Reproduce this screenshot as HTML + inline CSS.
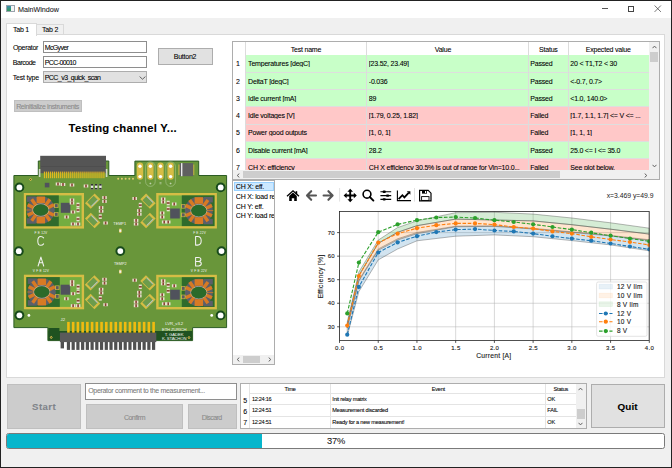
<!DOCTYPE html>
<html><head><meta charset="utf-8">
<style>
*{box-sizing:border-box;margin:0;padding:0}
html,body{width:672px;height:468px;overflow:hidden;background:#1f3a4e}
body{position:relative;font-family:"Liberation Sans",sans-serif;color:#000}
.a{position:absolute}
.t{position:absolute;white-space:nowrap;line-height:1;-webkit-text-stroke:0.08px currentColor}
.tx{font-size:7px;letter-spacing:-0.2px;color:#000}
.inp{background:#fff;border:1px solid #8e8e8e}
.btn{background:#e1e1e1;border:1px solid #adadad}
.dis{background:#cccccc;border:1px solid #bfbfbf}
</style></head><body>
<div class="a" style="left:0;top:0;width:672px;height:468px;background:#222"></div>
<div class="a" style="left:1px;top:1px;width:670px;height:466px;background:#f0f0f0"></div>
<div class="a" style="left:1px;top:1px;width:670px;height:17px;background:#fff"></div>
<div class="a" style="left:6px;top:4.5px;width:8.5px;height:7.5px;border:1px solid #9aa3ad;background:#f4f4f4"></div>
<div class="a" style="left:7px;top:5.5px;width:3.5px;height:5.5px;background:linear-gradient(#3c8fb0,#2f9a58)"></div>
<div class="t" style="left:18.00px;top:5.61px;font-size:7.2px;letter-spacing:-0.021px;color:#1a1a1a">MainWindow</div>
<div class="a" style="left:602px;top:8.4px;width:6.2px;height:0.9px;background:#555"></div>
<div class="a" style="left:628.2px;top:5.6px;width:6.2px;height:6.3px;border:0.9px solid #444"></div>
<svg class="a" style="left:654px;top:5px" width="8" height="8" viewBox="0 0 8 8"><path d="M0.6 0.5L6.9 6.9M6.9 0.5L0.6 6.9" stroke="#444" stroke-width="0.75"/></svg>
<div class="a" style="left:36px;top:24.4px;width:28px;height:10.2px;background:#f0f0f0;border:1px solid #d9d9d9;border-bottom:none"></div>
<div class="a" style="left:6px;top:34.4px;width:659px;height:343.6px;background:#fff;border:1px solid #d9d9d9"></div>
<div class="a" style="left:6px;top:23.4px;width:31px;height:12.2px;background:#fff;border:1px solid #d9d9d9;border-bottom:none"></div>
<div class="t" style="left:13.00px;top:25.97px;font-size:7.0px;letter-spacing:-0.225px;color:#000">Tab 1</div>
<div class="t" style="left:42.10px;top:26.07px;font-size:7.0px;letter-spacing:-0.225px;color:#000">Tab 2</div>
<div class="t" style="left:12.90px;top:43.97px;font-size:7.0px;letter-spacing:-0.316px;color:#000">Operator</div>
<div class="t" style="left:12.80px;top:59.07px;font-size:7.0px;letter-spacing:-0.482px;color:#000">Barcode</div>
<div class="t" style="left:12.80px;top:74.07px;font-size:7.0px;letter-spacing:-0.213px;color:#000">Test type</div>
<div class="a inp" style="left:43px;top:41.2px;width:104px;height:11.5px"></div>
<div class="a inp" style="left:43px;top:56.4px;width:104px;height:11.5px"></div>
<div class="a btn" style="left:43px;top:71.2px;width:104px;height:11.6px"></div>
<div class="t" style="left:44.70px;top:44.27px;font-size:7.0px;letter-spacing:-0.629px;color:#000">McGyver</div>
<div class="t" style="left:44.70px;top:59.37px;font-size:7.0px;letter-spacing:-0.597px;color:#000">PCC-00010</div>
<div class="t" style="left:44.70px;top:74.17px;font-size:7.0px;letter-spacing:-0.546px;color:#000">PCC_v3_quick_scan</div>
<svg class="a" style="left:138.5px;top:76.2px" width="7" height="4" viewBox="0 0 7 4"><path d="M0.6 0.6L3.5 3.2L6.4 0.6" stroke="#444" stroke-width="0.8" fill="none"/></svg>
<div class="a btn" style="left:158px;top:48px;width:55px;height:16.5px"></div>
<div class="t" style="left:173.75px;top:52.87px;font-size:7.0px;letter-spacing:-0.233px;color:#000">Button2</div>
<div class="a dis" style="left:14px;top:100.2px;width:68.4px;height:11.5px"></div>
<div class="t" style="left:16.20px;top:102.97px;font-size:7.0px;letter-spacing:-0.382px;color:#8a8a8a">Reinitialize instruments</div>
<div class="t" style="left:68.60px;top:122.93px;font-size:11.3px;letter-spacing:0.224px;color:#000;font-weight:bold">Testing channel Y...</div>
<svg class="a" style="left:10px;top:150px" width="222" height="205" viewBox="10 150 222 205" font-family="Liberation Sans, sans-serif">
<polygon points="13.9,175.5 38.3,175.5 38.3,161.0 108.8,161.0 108.8,175.5 134.9,175.5 134.9,161.1 198.7,161.1 198.7,175.5 226.6,175.5 226.6,327.6 192.6,327.6 192.6,340.6 47.9,340.6 47.9,327.6 13.9,327.6" fill="#69963a" stroke="#2c5c24" stroke-width="1"/>
<rect x="48.4" y="331" width="143.7" height="9.1" fill="#1f5220"/>
<rect x="48.4" y="328" width="11" height="12.1" fill="#1f5220"/>
<rect x="40.2" y="155.8" width="65.8" height="17.4" fill="#555555"/>
<rect x="41" y="166" width="64" height="1" fill="#4a4a4a" opacity="0.6"/>
<rect x="43.90" y="171.6" width="1.2" height="6.6" fill="#e0b720"/>
<rect x="45.88" y="171.6" width="1.2" height="6.6" fill="#e0b720"/>
<rect x="47.86" y="171.6" width="1.2" height="6.6" fill="#e0b720"/>
<rect x="49.84" y="171.6" width="1.2" height="6.6" fill="#e0b720"/>
<rect x="51.82" y="171.6" width="1.2" height="6.6" fill="#e0b720"/>
<rect x="53.80" y="171.6" width="1.2" height="6.6" fill="#e0b720"/>
<rect x="55.78" y="171.6" width="1.2" height="6.6" fill="#e0b720"/>
<rect x="57.76" y="171.6" width="1.2" height="6.6" fill="#e0b720"/>
<rect x="59.74" y="171.6" width="1.2" height="6.6" fill="#e0b720"/>
<rect x="61.72" y="171.6" width="1.2" height="6.6" fill="#e0b720"/>
<rect x="63.70" y="171.6" width="1.2" height="6.6" fill="#e0b720"/>
<rect x="65.68" y="171.6" width="1.2" height="6.6" fill="#e0b720"/>
<rect x="67.66" y="171.6" width="1.2" height="6.6" fill="#e0b720"/>
<rect x="69.64" y="171.6" width="1.2" height="6.6" fill="#e0b720"/>
<rect x="71.62" y="171.6" width="1.2" height="6.6" fill="#e0b720"/>
<rect x="73.60" y="171.6" width="1.2" height="6.6" fill="#e0b720"/>
<rect x="75.58" y="171.6" width="1.2" height="6.6" fill="#e0b720"/>
<rect x="77.56" y="171.6" width="1.2" height="6.6" fill="#e0b720"/>
<rect x="79.54" y="171.6" width="1.2" height="6.6" fill="#e0b720"/>
<rect x="81.52" y="171.6" width="1.2" height="6.6" fill="#e0b720"/>
<rect x="83.50" y="171.6" width="1.2" height="6.6" fill="#e0b720"/>
<rect x="85.48" y="171.6" width="1.2" height="6.6" fill="#e0b720"/>
<rect x="87.46" y="171.6" width="1.2" height="6.6" fill="#e0b720"/>
<rect x="89.44" y="171.6" width="1.2" height="6.6" fill="#e0b720"/>
<rect x="91.42" y="171.6" width="1.2" height="6.6" fill="#e0b720"/>
<rect x="93.40" y="171.6" width="1.2" height="6.6" fill="#e0b720"/>
<rect x="95.38" y="171.6" width="1.2" height="6.6" fill="#e0b720"/>
<rect x="97.36" y="171.6" width="1.2" height="6.6" fill="#e0b720"/>
<rect x="99.34" y="171.6" width="1.2" height="6.6" fill="#e0b720"/>
<rect x="101.32" y="171.6" width="1.2" height="6.6" fill="#e0b720"/>
<rect x="103.30" y="171.6" width="1.2" height="6.6" fill="#e0b720"/>
<rect x="38.8" y="169" width="1.6" height="8" fill="#cfd8c8"/>
<rect x="105.8" y="169" width="1.6" height="8" fill="#cfd8c8"/>
<rect x="136.80" y="162.4" width="6.4" height="17.4" rx="3.2" fill="#d6bd45"/>
<circle cx="140.0" cy="166.3" r="1.7" fill="#fff"/><circle cx="140.0" cy="176.6" r="1.7" fill="#fff"/>
<rect x="147.20" y="162.4" width="6.4" height="17.4" rx="3.2" fill="#d6bd45"/>
<circle cx="150.4" cy="166.3" r="1.7" fill="#fff"/><circle cx="150.4" cy="176.6" r="1.7" fill="#fff"/>
<rect x="157.30" y="162.4" width="6.4" height="17.4" rx="3.2" fill="#d6bd45"/>
<circle cx="160.5" cy="166.3" r="1.7" fill="#fff"/><circle cx="160.5" cy="176.6" r="1.7" fill="#fff"/>
<rect x="167.40" y="162.4" width="6.4" height="17.4" rx="3.2" fill="#d6bd45"/>
<circle cx="170.6" cy="166.3" r="1.7" fill="#fff"/><circle cx="170.6" cy="176.6" r="1.7" fill="#fff"/>
<rect x="145.60" y="161.8" width="9.6" height="24.6" rx="4.8" fill="none" stroke="#d9e8cc" stroke-width="0.35"/>
<rect x="165.80" y="161.8" width="9.6" height="24.6" rx="4.8" fill="none" stroke="#d9e8cc" stroke-width="0.35"/>
<path d="M139 183H141M149.4 183.5H151.4M150.4 182.5V184.5M159.5 182.6H161.5M159.5 183.8H161.5M169.6 183.5H171.6M170.6 182.5V184.5" stroke="#e0e8d8" stroke-width="0.5"/>
<circle cx="118.2" cy="178.8" r="1.0" fill="#e0cc70"/>
<circle cx="121.9" cy="178.8" r="1.0" fill="#e0cc70"/>
<circle cx="125.6" cy="178.8" r="1.0" fill="#e0cc70"/>
<circle cx="129.3" cy="178.8" r="1.0" fill="#e0cc70"/>
<circle cx="133.0" cy="178.8" r="1.0" fill="#e0cc70"/>
<rect x="178.3" y="164.5" width="16" height="10.6" fill="#d6bd45" opacity="0.8"/>
<rect x="179.6" y="163.1" width="13.6" height="13.1" fill="#606060"/>
<rect x="181" y="163.1" width="1.4" height="13.1" fill="#e8e8e8"/>
<path d="M30.6 177.9L32.2 179.5L30.6 181.1L29.0 179.5Z" fill="#d8c050"/><circle cx="30.6" cy="179.5" r="0.5" fill="#2a2a10"/>
<path d="M51.2 335.79999999999995L52.800000000000004 337.4L51.2 339.0L49.6 337.4Z" fill="#d8c050"/><circle cx="51.2" cy="337.4" r="0.5" fill="#2a2a10"/>
<path d="M189 336.0L190.6 337.6L189 339.20000000000005L187.4 337.6Z" fill="#d8c050"/><circle cx="189" cy="337.6" r="0.5" fill="#2a2a10"/>
<circle cx="19.4" cy="187.4" r="4.9" fill="#184a1c"/><circle cx="19.4" cy="187.4" r="2.9" fill="#fff"/>
<circle cx="220.7" cy="187.4" r="4.9" fill="#184a1c"/><circle cx="220.7" cy="187.4" r="2.9" fill="#fff"/>
<circle cx="18.8" cy="251.2" r="4.9" fill="#184a1c"/><circle cx="18.8" cy="251.2" r="2.9" fill="#fff"/>
<circle cx="120.3" cy="251.1" r="4.9" fill="#184a1c"/><circle cx="120.3" cy="251.1" r="2.9" fill="#fff"/>
<circle cx="221.5" cy="251.1" r="4.9" fill="#184a1c"/><circle cx="221.5" cy="251.1" r="2.9" fill="#fff"/>
<circle cx="19.4" cy="315.3" r="4.9" fill="#184a1c"/><circle cx="19.4" cy="315.3" r="2.9" fill="#fff"/>
<circle cx="220.6" cy="315.4" r="4.9" fill="#184a1c"/><circle cx="220.6" cy="315.4" r="2.9" fill="#fff"/>
<circle cx="28.9" cy="315.4" r="1.4" fill="#fff"/>
<circle cx="211.7" cy="315.4" r="1.4" fill="#fff"/>
<rect x="25.0" y="194.2" width="57.800000000000004" height="33.199999999999996" fill="#74ad40" stroke="#d6bd45" stroke-width="2.4"/>
<rect x="26.2" y="195.4" width="32.6" height="30.799999999999994" fill="#2f6b2c"/>
<rect x="26.80" y="196.40" width="9" height="5.5" fill="#5c5f6a"/>
<rect x="26.80" y="218.20" width="9" height="5.5" fill="#5c5f6a"/>
<ellipse cx="40.8" cy="210.0" rx="14" ry="13.8" fill="#5c5f6a"/>
<line x1="47.48" y1="212.10" x2="53.97" y2="215.21" stroke="#d77a24" stroke-width="3.4"/>
<line x1="45.43" y1="214.29" x2="49.93" y2="220.65" stroke="#d77a24" stroke-width="3.4"/>
<line x1="47.48" y1="207.90" x2="53.97" y2="204.79" stroke="#d77a24" stroke-width="3.4"/>
<line x1="45.43" y1="205.71" x2="49.93" y2="199.35" stroke="#d77a24" stroke-width="3.4"/>
<line x1="34.12" y1="212.10" x2="27.63" y2="215.21" stroke="#d77a24" stroke-width="3.4"/>
<line x1="36.17" y1="214.29" x2="31.67" y2="220.65" stroke="#d77a24" stroke-width="3.4"/>
<line x1="34.12" y1="207.90" x2="27.63" y2="204.79" stroke="#d77a24" stroke-width="3.4"/>
<line x1="36.17" y1="205.71" x2="31.67" y2="199.35" stroke="#d77a24" stroke-width="3.4"/>
<line x1="33.30" y1="210.0" x2="26.30" y2="210.0" stroke="#d77a24" stroke-width="0.8"/>
<rect x="36.60" y="196.60" width="8.5" height="6.6" fill="#d77a24"/>
<rect x="36.60" y="216.60" width="8.5" height="6.8" fill="#d77a24"/>
<ellipse cx="40.8" cy="210.0" rx="8.0" ry="6.1" fill="none" stroke="#c8d0c8" stroke-width="0.6"/>
<ellipse cx="40.8" cy="210.0" rx="7.7" ry="5.8" fill="#2b6a2a"/>
<rect x="54.099999999999994" y="203.5" width="4.4" height="4.4" fill="#d6bd45"/><rect x="54.9" y="204.1" width="2.8" height="3.2" fill="#5a5a60"/>
<rect x="54.099999999999994" y="212.10000000000002" width="4.4" height="4.4" fill="#d6bd45"/><rect x="54.9" y="212.70000000000002" width="2.8" height="3.2" fill="#5a5a60"/>
<rect x="60.8" y="202.8" width="9.6" height="10" fill="#50525c"/>
<rect x="69.70" y="198.50" width="4.6" height="3" fill="#e6e0cc"/><rect x="71.20" y="198.50" width="1.6" height="3" fill="#8a4434"/>
<rect x="69.70" y="201.50" width="4.6" height="3" fill="#e6e0cc"/><rect x="71.20" y="201.50" width="1.6" height="3" fill="#8a4434"/>
<rect x="76.50" y="202.70" width="3" height="4.6" fill="#e6e0cc"/><rect x="76.50" y="204.20" width="3" height="1.6" fill="#8a4434"/>
<rect x="76.50" y="207.70" width="3" height="4.6" fill="#e6e0cc"/><rect x="76.50" y="209.20" width="3" height="1.6" fill="#8a4434"/>
<rect x="70.70" y="210.50" width="4.6" height="3" fill="#e6e0cc"/><rect x="72.20" y="210.50" width="1.6" height="3" fill="#8a4434"/>
<rect x="64.30" y="215.50" width="4.6" height="3" fill="#e6e0cc"/><rect x="65.80" y="215.50" width="1.6" height="3" fill="#8a4434"/>
<rect x="76.50" y="216.70" width="3" height="4.6" fill="#e6e0cc"/><rect x="76.50" y="218.20" width="3" height="1.6" fill="#8a4434"/>
<rect x="75.70" y="222.50" width="4.6" height="3" fill="#e6e0cc"/><rect x="77.20" y="222.50" width="1.6" height="3" fill="#8a4434"/>
<rect x="70.70" y="222.50" width="4.6" height="3" fill="#e6e0cc"/><rect x="72.20" y="222.50" width="1.6" height="3" fill="#8a4434"/>
<rect x="157.39999999999998" y="194.2" width="58.30000000000002" height="33.1" fill="#74ad40" stroke="#d6bd45" stroke-width="2.4"/>
<rect x="181.8" y="195.4" width="32.69999999999999" height="30.7" fill="#2f6b2c"/>
<rect x="203.80" y="197.00" width="9" height="5.5" fill="#5c5f6a"/>
<rect x="203.80" y="218.80" width="9" height="5.5" fill="#5c5f6a"/>
<ellipse cx="198.8" cy="210.6" rx="14" ry="13.8" fill="#5c5f6a"/>
<line x1="205.48" y1="212.70" x2="211.97" y2="215.81" stroke="#d77a24" stroke-width="3.4"/>
<line x1="203.43" y1="214.89" x2="207.93" y2="221.25" stroke="#d77a24" stroke-width="3.4"/>
<line x1="205.48" y1="208.50" x2="211.97" y2="205.39" stroke="#d77a24" stroke-width="3.4"/>
<line x1="203.43" y1="206.31" x2="207.93" y2="199.95" stroke="#d77a24" stroke-width="3.4"/>
<line x1="192.12" y1="212.70" x2="185.63" y2="215.81" stroke="#d77a24" stroke-width="3.4"/>
<line x1="194.17" y1="214.89" x2="189.67" y2="221.25" stroke="#d77a24" stroke-width="3.4"/>
<line x1="192.12" y1="208.50" x2="185.63" y2="205.39" stroke="#d77a24" stroke-width="3.4"/>
<line x1="194.17" y1="206.31" x2="189.67" y2="199.95" stroke="#d77a24" stroke-width="3.4"/>
<line x1="206.30" y1="210.6" x2="213.30" y2="210.6" stroke="#d77a24" stroke-width="0.8"/>
<rect x="194.60" y="197.20" width="8.5" height="6.6" fill="#d77a24"/>
<rect x="194.60" y="217.20" width="8.5" height="6.8" fill="#d77a24"/>
<ellipse cx="198.8" cy="210.6" rx="8.0" ry="6.1" fill="none" stroke="#c8d0c8" stroke-width="0.6"/>
<ellipse cx="198.8" cy="210.6" rx="7.7" ry="5.8" fill="#2b6a2a"/>
<rect x="181.10000000000002" y="204.1" width="4.4" height="4.4" fill="#d6bd45"/><rect x="181.9" y="204.7" width="2.8" height="3.2" fill="#5a5a60"/>
<rect x="181.10000000000002" y="212.70000000000002" width="4.4" height="4.4" fill="#d6bd45"/><rect x="181.9" y="213.3" width="2.8" height="3.2" fill="#5a5a60"/>
<rect x="170.2" y="208.5" width="9.6" height="10" fill="#50525c"/>
<rect x="160.90" y="197.50" width="4.6" height="3" fill="#e6e0cc"/><rect x="162.40" y="197.50" width="1.6" height="3" fill="#8a4434"/>
<rect x="160.90" y="200.50" width="4.6" height="3" fill="#e6e0cc"/><rect x="162.40" y="200.50" width="1.6" height="3" fill="#8a4434"/>
<rect x="166.70" y="200.70" width="3" height="4.6" fill="#e6e0cc"/><rect x="166.70" y="202.20" width="3" height="1.6" fill="#8a4434"/>
<rect x="171.90" y="202.50" width="4.6" height="3" fill="#e6e0cc"/><rect x="173.40" y="202.50" width="1.6" height="3" fill="#8a4434"/>
<rect x="166.70" y="206.70" width="3" height="4.6" fill="#e6e0cc"/><rect x="166.70" y="208.20" width="3" height="1.6" fill="#8a4434"/>
<rect x="159.90" y="211.50" width="4.6" height="3" fill="#e6e0cc"/><rect x="161.40" y="211.50" width="1.6" height="3" fill="#8a4434"/>
<rect x="159.90" y="215.50" width="4.6" height="3" fill="#e6e0cc"/><rect x="161.40" y="215.50" width="1.6" height="3" fill="#8a4434"/>
<rect x="161.90" y="220.50" width="4.6" height="3" fill="#e6e0cc"/><rect x="163.40" y="220.50" width="1.6" height="3" fill="#8a4434"/>
<rect x="165.90" y="220.50" width="4.6" height="3" fill="#e6e0cc"/><rect x="167.40" y="220.50" width="1.6" height="3" fill="#8a4434"/>
<rect x="25.099999999999998" y="275.9" width="57.8" height="32.200000000000024" fill="#74ad40" stroke="#d6bd45" stroke-width="2.4"/>
<rect x="26.299999999999997" y="277.09999999999997" width="33.5" height="29.800000000000022" fill="#2f6b2c"/>
<rect x="27.80" y="278.40" width="9" height="5.5" fill="#5c5f6a"/>
<rect x="27.80" y="300.20" width="9" height="5.5" fill="#5c5f6a"/>
<ellipse cx="41.8" cy="292.0" rx="14" ry="13.8" fill="#5c5f6a"/>
<line x1="48.48" y1="294.10" x2="54.97" y2="297.21" stroke="#d77a24" stroke-width="3.4"/>
<line x1="46.43" y1="296.29" x2="50.93" y2="302.65" stroke="#d77a24" stroke-width="3.4"/>
<line x1="48.48" y1="289.90" x2="54.97" y2="286.79" stroke="#d77a24" stroke-width="3.4"/>
<line x1="46.43" y1="287.71" x2="50.93" y2="281.35" stroke="#d77a24" stroke-width="3.4"/>
<line x1="35.12" y1="294.10" x2="28.63" y2="297.21" stroke="#d77a24" stroke-width="3.4"/>
<line x1="37.17" y1="296.29" x2="32.67" y2="302.65" stroke="#d77a24" stroke-width="3.4"/>
<line x1="35.12" y1="289.90" x2="28.63" y2="286.79" stroke="#d77a24" stroke-width="3.4"/>
<line x1="37.17" y1="287.71" x2="32.67" y2="281.35" stroke="#d77a24" stroke-width="3.4"/>
<line x1="34.30" y1="292.0" x2="27.30" y2="292.0" stroke="#d77a24" stroke-width="0.8"/>
<rect x="37.60" y="278.60" width="8.5" height="6.6" fill="#d77a24"/>
<rect x="37.60" y="298.60" width="8.5" height="6.8" fill="#d77a24"/>
<ellipse cx="41.8" cy="292.0" rx="8.0" ry="6.1" fill="none" stroke="#c8d0c8" stroke-width="0.6"/>
<ellipse cx="41.8" cy="292.0" rx="7.7" ry="5.8" fill="#2b6a2a"/>
<rect x="55.099999999999994" y="285.5" width="4.4" height="4.4" fill="#d6bd45"/><rect x="55.9" y="286.09999999999997" width="2.8" height="3.2" fill="#5a5a60"/>
<rect x="55.099999999999994" y="294.1" width="4.4" height="4.4" fill="#d6bd45"/><rect x="55.9" y="294.7" width="2.8" height="3.2" fill="#5a5a60"/>
<rect x="60.60000000000001" y="284.7" width="9.6" height="10" fill="#50525c"/>
<rect x="69.80" y="280.20" width="4.6" height="3" fill="#e6e0cc"/><rect x="71.30" y="280.20" width="1.6" height="3" fill="#8a4434"/>
<rect x="69.80" y="283.20" width="4.6" height="3" fill="#e6e0cc"/><rect x="71.30" y="283.20" width="1.6" height="3" fill="#8a4434"/>
<rect x="76.60" y="284.40" width="3" height="4.6" fill="#e6e0cc"/><rect x="76.60" y="285.90" width="3" height="1.6" fill="#8a4434"/>
<rect x="76.60" y="289.40" width="3" height="4.6" fill="#e6e0cc"/><rect x="76.60" y="290.90" width="3" height="1.6" fill="#8a4434"/>
<rect x="70.80" y="292.20" width="4.6" height="3" fill="#e6e0cc"/><rect x="72.30" y="292.20" width="1.6" height="3" fill="#8a4434"/>
<rect x="64.10" y="297.20" width="4.6" height="3" fill="#e6e0cc"/><rect x="65.60" y="297.20" width="1.6" height="3" fill="#8a4434"/>
<rect x="76.60" y="298.40" width="3" height="4.6" fill="#e6e0cc"/><rect x="76.60" y="299.90" width="3" height="1.6" fill="#8a4434"/>
<rect x="75.80" y="304.20" width="4.6" height="3" fill="#e6e0cc"/><rect x="77.30" y="304.20" width="1.6" height="3" fill="#8a4434"/>
<rect x="70.80" y="304.20" width="4.6" height="3" fill="#e6e0cc"/><rect x="72.30" y="304.20" width="1.6" height="3" fill="#8a4434"/>
<rect x="157.39999999999998" y="276.0" width="58.30000000000002" height="32.19999999999997" fill="#74ad40" stroke="#d6bd45" stroke-width="2.4"/>
<rect x="181.8" y="277.2" width="32.69999999999999" height="29.799999999999965" fill="#2f6b2c"/>
<rect x="203.80" y="279.00" width="9" height="5.5" fill="#5c5f6a"/>
<rect x="203.80" y="300.80" width="9" height="5.5" fill="#5c5f6a"/>
<ellipse cx="198.8" cy="292.6" rx="14" ry="13.8" fill="#5c5f6a"/>
<line x1="205.48" y1="294.70" x2="211.97" y2="297.81" stroke="#d77a24" stroke-width="3.4"/>
<line x1="203.43" y1="296.89" x2="207.93" y2="303.25" stroke="#d77a24" stroke-width="3.4"/>
<line x1="205.48" y1="290.50" x2="211.97" y2="287.39" stroke="#d77a24" stroke-width="3.4"/>
<line x1="203.43" y1="288.31" x2="207.93" y2="281.95" stroke="#d77a24" stroke-width="3.4"/>
<line x1="192.12" y1="294.70" x2="185.63" y2="297.81" stroke="#d77a24" stroke-width="3.4"/>
<line x1="194.17" y1="296.89" x2="189.67" y2="303.25" stroke="#d77a24" stroke-width="3.4"/>
<line x1="192.12" y1="290.50" x2="185.63" y2="287.39" stroke="#d77a24" stroke-width="3.4"/>
<line x1="194.17" y1="288.31" x2="189.67" y2="281.95" stroke="#d77a24" stroke-width="3.4"/>
<line x1="206.30" y1="292.6" x2="213.30" y2="292.6" stroke="#d77a24" stroke-width="0.8"/>
<rect x="194.60" y="279.20" width="8.5" height="6.6" fill="#d77a24"/>
<rect x="194.60" y="299.20" width="8.5" height="6.8" fill="#d77a24"/>
<ellipse cx="198.8" cy="292.6" rx="8.0" ry="6.1" fill="none" stroke="#c8d0c8" stroke-width="0.6"/>
<ellipse cx="198.8" cy="292.6" rx="7.7" ry="5.8" fill="#2b6a2a"/>
<rect x="181.10000000000002" y="286.1" width="4.4" height="4.4" fill="#d6bd45"/><rect x="181.9" y="286.7" width="2.8" height="3.2" fill="#5a5a60"/>
<rect x="181.10000000000002" y="294.70000000000005" width="4.4" height="4.4" fill="#d6bd45"/><rect x="181.9" y="295.3" width="2.8" height="3.2" fill="#5a5a60"/>
<rect x="170.2" y="289.7" width="9.6" height="10" fill="#50525c"/>
<rect x="160.90" y="279.30" width="4.6" height="3" fill="#e6e0cc"/><rect x="162.40" y="279.30" width="1.6" height="3" fill="#8a4434"/>
<rect x="160.90" y="282.30" width="4.6" height="3" fill="#e6e0cc"/><rect x="162.40" y="282.30" width="1.6" height="3" fill="#8a4434"/>
<rect x="166.70" y="282.50" width="3" height="4.6" fill="#e6e0cc"/><rect x="166.70" y="284.00" width="3" height="1.6" fill="#8a4434"/>
<rect x="171.90" y="284.30" width="4.6" height="3" fill="#e6e0cc"/><rect x="173.40" y="284.30" width="1.6" height="3" fill="#8a4434"/>
<rect x="166.70" y="288.50" width="3" height="4.6" fill="#e6e0cc"/><rect x="166.70" y="290.00" width="3" height="1.6" fill="#8a4434"/>
<rect x="159.90" y="293.30" width="4.6" height="3" fill="#e6e0cc"/><rect x="161.40" y="293.30" width="1.6" height="3" fill="#8a4434"/>
<rect x="159.90" y="297.30" width="4.6" height="3" fill="#e6e0cc"/><rect x="161.40" y="297.30" width="1.6" height="3" fill="#8a4434"/>
<rect x="161.90" y="302.30" width="4.6" height="3" fill="#e6e0cc"/><rect x="163.40" y="302.30" width="1.6" height="3" fill="#8a4434"/>
<rect x="165.90" y="302.30" width="4.6" height="3" fill="#e6e0cc"/><rect x="167.40" y="302.30" width="1.6" height="3" fill="#8a4434"/>
<g transform="translate(92.7,201.2) rotate(45)"><rect x="-4.05" y="-6.8" width="8.1" height="13.6" fill="#d6bd45"/><rect x="-3.2" y="-4.6" width="6.4" height="9.2" fill="#6c9c4c"/><rect x="2.2" y="-4.6" width="1.0" height="9.2" fill="#c0c8c0"/></g>
<g transform="translate(92.7,220.5) rotate(-45)"><rect x="-4.05" y="-6.8" width="8.1" height="13.6" fill="#d6bd45"/><rect x="-3.2" y="-4.6" width="6.4" height="9.2" fill="#6c9c4c"/><rect x="2.2" y="-4.6" width="1.0" height="9.2" fill="#c0c8c0"/></g>
<g transform="translate(148,201.2) rotate(-45)"><rect x="-4.05" y="-6.8" width="8.1" height="13.6" fill="#d6bd45"/><rect x="-3.2" y="-4.6" width="6.4" height="9.2" fill="#6c9c4c"/><rect x="2.2" y="-4.6" width="1.0" height="9.2" fill="#c0c8c0"/></g>
<g transform="translate(148,220.5) rotate(45)"><rect x="-4.05" y="-6.8" width="8.1" height="13.6" fill="#d6bd45"/><rect x="-3.2" y="-4.6" width="6.4" height="9.2" fill="#6c9c4c"/><rect x="2.2" y="-4.6" width="1.0" height="9.2" fill="#c0c8c0"/></g>
<g transform="translate(92.5,282.9) rotate(45)"><rect x="-4.05" y="-6.8" width="8.1" height="13.6" fill="#d6bd45"/><rect x="-3.2" y="-4.6" width="6.4" height="9.2" fill="#6c9c4c"/><rect x="2.2" y="-4.6" width="1.0" height="9.2" fill="#c0c8c0"/></g>
<g transform="translate(92.5,301.5) rotate(-45)"><rect x="-4.05" y="-6.8" width="8.1" height="13.6" fill="#d6bd45"/><rect x="-3.2" y="-4.6" width="6.4" height="9.2" fill="#6c9c4c"/><rect x="2.2" y="-4.6" width="1.0" height="9.2" fill="#c0c8c0"/></g>
<g transform="translate(147.9,282.9) rotate(-45)"><rect x="-4.05" y="-6.8" width="8.1" height="13.6" fill="#d6bd45"/><rect x="-3.2" y="-4.6" width="6.4" height="9.2" fill="#6c9c4c"/><rect x="2.2" y="-4.6" width="1.0" height="9.2" fill="#c0c8c0"/></g>
<g transform="translate(147.9,301.5) rotate(45)"><rect x="-4.05" y="-6.8" width="8.1" height="13.6" fill="#d6bd45"/><rect x="-3.2" y="-4.6" width="6.4" height="9.2" fill="#6c9c4c"/><rect x="2.2" y="-4.6" width="1.0" height="9.2" fill="#c0c8c0"/></g>
<rect x="102.20" y="196.10" width="4.6" height="3" fill="#e6e0cc"/><rect x="103.70" y="196.10" width="1.6" height="3" fill="#8a4434"/>
<rect x="102.20" y="277.80" width="4.6" height="3" fill="#e6e0cc"/><rect x="103.70" y="277.80" width="1.6" height="3" fill="#8a4434"/>
<rect x="102.20" y="199.90" width="4.6" height="3" fill="#e6e0cc"/><rect x="103.70" y="199.90" width="1.6" height="3" fill="#8a4434"/>
<rect x="102.20" y="281.60" width="4.6" height="3" fill="#e6e0cc"/><rect x="103.70" y="281.60" width="1.6" height="3" fill="#8a4434"/>
<rect x="98.80" y="206.10" width="4.6" height="3" fill="#e6e0cc"/><rect x="100.30" y="206.10" width="1.6" height="3" fill="#8a4434"/>
<rect x="98.80" y="287.80" width="4.6" height="3" fill="#e6e0cc"/><rect x="100.30" y="287.80" width="1.6" height="3" fill="#8a4434"/>
<rect x="98.80" y="209.70" width="4.6" height="3" fill="#e6e0cc"/><rect x="100.30" y="209.70" width="1.6" height="3" fill="#8a4434"/>
<rect x="98.80" y="291.40" width="4.6" height="3" fill="#e6e0cc"/><rect x="100.30" y="291.40" width="1.6" height="3" fill="#8a4434"/>
<rect x="98.80" y="214.30" width="3" height="4.6" fill="#e6e0cc"/><rect x="98.80" y="215.80" width="3" height="1.6" fill="#8a4434"/>
<rect x="98.80" y="296.00" width="3" height="4.6" fill="#e6e0cc"/><rect x="98.80" y="297.50" width="3" height="1.6" fill="#8a4434"/>
<rect x="103.30" y="221.50" width="4.6" height="3" fill="#e6e0cc"/><rect x="104.80" y="221.50" width="1.6" height="3" fill="#8a4434"/>
<rect x="103.30" y="303.20" width="4.6" height="3" fill="#e6e0cc"/><rect x="104.80" y="303.20" width="1.6" height="3" fill="#8a4434"/>
<rect x="132.40" y="197.00" width="4.6" height="3" fill="#e6e0cc"/><rect x="133.90" y="197.00" width="1.6" height="3" fill="#8a4434"/>
<rect x="132.40" y="278.70" width="4.6" height="3" fill="#e6e0cc"/><rect x="133.90" y="278.70" width="1.6" height="3" fill="#8a4434"/>
<rect x="138.80" y="202.80" width="3" height="4.6" fill="#e6e0cc"/><rect x="138.80" y="204.30" width="3" height="1.6" fill="#8a4434"/>
<rect x="138.80" y="284.50" width="3" height="4.6" fill="#e6e0cc"/><rect x="138.80" y="286.00" width="3" height="1.6" fill="#8a4434"/>
<rect x="137.00" y="209.10" width="4.6" height="3" fill="#e6e0cc"/><rect x="138.50" y="209.10" width="1.6" height="3" fill="#8a4434"/>
<rect x="137.00" y="290.80" width="4.6" height="3" fill="#e6e0cc"/><rect x="138.50" y="290.80" width="1.6" height="3" fill="#8a4434"/>
<rect x="137.00" y="212.70" width="4.6" height="3" fill="#e6e0cc"/><rect x="138.50" y="212.70" width="1.6" height="3" fill="#8a4434"/>
<rect x="137.00" y="294.40" width="4.6" height="3" fill="#e6e0cc"/><rect x="138.50" y="294.40" width="1.6" height="3" fill="#8a4434"/>
<rect x="133.80" y="218.90" width="4.6" height="3" fill="#e6e0cc"/><rect x="135.30" y="218.90" width="1.6" height="3" fill="#8a4434"/>
<rect x="133.80" y="300.60" width="4.6" height="3" fill="#e6e0cc"/><rect x="135.30" y="300.60" width="1.6" height="3" fill="#8a4434"/>
<rect x="133.80" y="222.50" width="4.6" height="3" fill="#e6e0cc"/><rect x="135.30" y="222.50" width="1.6" height="3" fill="#8a4434"/>
<rect x="133.80" y="304.20" width="4.6" height="3" fill="#e6e0cc"/><rect x="135.30" y="304.20" width="1.6" height="3" fill="#8a4434"/>
<rect x="55.70" y="182.50" width="4.6" height="3" fill="#e6e0cc"/><rect x="57.20" y="182.50" width="1.6" height="3" fill="#8a4434"/>
<rect x="60.70" y="183.00" width="4.6" height="3" fill="#e6e0cc"/><rect x="62.20" y="183.00" width="1.6" height="3" fill="#8a4434"/>
<rect x="69.70" y="183.50" width="4.6" height="3" fill="#e6e0cc"/><rect x="71.20" y="183.50" width="1.6" height="3" fill="#8a4434"/>
<rect x="83.70" y="184.50" width="4.6" height="3" fill="#e6e0cc"/><rect x="85.20" y="184.50" width="1.6" height="3" fill="#8a4434"/>
<rect x="44.8" y="182.8" width="4.6" height="4.6" fill="#50525c"/>
<rect x="90.8" y="184" width="2.4" height="5.5" fill="#e8e8e8"/><rect x="90.8" y="184" width="2.4" height="1.6" fill="#333"/><rect x="90.8" y="187.9" width="2.4" height="1.6" fill="#333"/>
<rect x="95.0" y="184" width="2.4" height="5.5" fill="#e8e8e8"/><rect x="95.0" y="184" width="2.4" height="1.6" fill="#333"/><rect x="95.0" y="187.9" width="2.4" height="1.6" fill="#333"/>
<rect x="99.2" y="184" width="2.4" height="5.5" fill="#e8e8e8"/><rect x="99.2" y="184" width="2.4" height="1.6" fill="#333"/><rect x="99.2" y="187.9" width="2.4" height="1.6" fill="#333"/>
<rect x="119" y="228.5" width="2.6" height="4.4" rx="0.8" fill="#d6bd45"/><rect x="119.3" y="229.5" width="2" height="2.4" fill="#f0f0f0"/>
<rect x="119" y="269.40000000000003" width="2.6" height="4.4" rx="0.8" fill="#d6bd45"/><rect x="119.3" y="270.40000000000003" width="2" height="2.4" fill="#f0f0f0"/>
<path d="M43.6 237.9 Q42.5 236.5 40.8 236.5 Q37.8 236.5 37.8 240.9 Q37.8 245.3 40.8 245.3 Q42.5 245.3 43.6 243.9" fill="none" stroke="#f2f2f2" stroke-width="1.05" stroke-linecap="round" stroke-linejoin="round"/>
<path d="M38.1 266 L40.9 257.1 L43.7 266 M38.9 262.8 H42.9" fill="none" stroke="#f2f2f2" stroke-width="1.05" stroke-linecap="round" stroke-linejoin="round"/>
<path d="M195.6 236.5 V245.1 H197.6 Q201.2 245.1 201.2 240.8 Q201.2 236.5 197.6 236.5 Z" fill="none" stroke="#f2f2f2" stroke-width="1.05" stroke-linecap="round" stroke-linejoin="round"/>
<path d="M195.6 257.4 V265.9 H198.6 Q201.3 265.9 201.3 263.6 Q201.3 261.4 198.4 261.4 H195.6 M198.4 261.4 Q200.9 261.4 200.9 259.4 Q200.9 257.4 198.3 257.4 H195.6" fill="none" stroke="#f2f2f2" stroke-width="1.05" stroke-linecap="round" stroke-linejoin="round"/>
<text x="41" y="233.5" font-size="3.2" fill="#f4f4f4" text-anchor="middle" letter-spacing="0.2">F E  12V</text>
<text x="199.6" y="233.5" font-size="3.2" fill="#f4f4f4" text-anchor="middle" letter-spacing="0.2">F E  22V</text>
<text x="41" y="272.3" font-size="3.2" fill="#f4f4f4" text-anchor="middle" letter-spacing="0.2">V F E  12V</text>
<text x="199" y="272.3" font-size="3.2" fill="#f4f4f4" text-anchor="middle" letter-spacing="0.2">V F E  22V</text>
<text x="119.7" y="224.8" font-size="3.8" fill="#f4f4f4" text-anchor="middle" letter-spacing="0">TEMP1</text>
<text x="120.3" y="265.4" font-size="3.8" fill="#f4f4f4" text-anchor="middle" letter-spacing="0">TEMP2</text>
<text x="62.8" y="320.5" font-size="4.2" fill="#f4f4f4" text-anchor="middle" letter-spacing="0">J2</text>
<text x="174.2" y="325.0" font-size="4.3" fill="#f4f4f4" text-anchor="middle" letter-spacing="-0.1">LVR_v3.2</text>
<text x="174.2" y="330.5" font-size="4.3" fill="#f4f4f4" text-anchor="middle" letter-spacing="-0.15">ETH ZURICH</text>
<text x="174.2" y="335.9" font-size="4.3" fill="#f4f4f4" text-anchor="middle" letter-spacing="-0.1">T. GADEK</text>
<text x="174.2" y="340.3" font-size="4.3" fill="#f4f4f4" text-anchor="middle" letter-spacing="-0.15">K. STACHON</text>
<rect x="59.9" y="332.6" width="96.4" height="9.5" fill="#5a5a5a"/>
<rect x="60.6" y="342" width="3.4" height="6.4" fill="#505050"/>
<rect x="67.15" y="321.9" width="2.6" height="10.7" fill="#f0bb10"/>
<rect x="66.85" y="342" width="3.2" height="7.9" fill="#505050"/>
<rect x="71.88" y="321.9" width="2.6" height="10.7" fill="#f0bb10"/>
<rect x="71.58" y="342" width="3.2" height="7.9" fill="#505050"/>
<rect x="76.61" y="321.9" width="2.6" height="10.7" fill="#f0bb10"/>
<rect x="76.31" y="342" width="3.2" height="7.9" fill="#505050"/>
<rect x="81.34" y="321.9" width="2.6" height="10.7" fill="#f0bb10"/>
<rect x="81.04" y="342" width="3.2" height="7.9" fill="#505050"/>
<rect x="86.07" y="321.9" width="2.6" height="10.7" fill="#f0bb10"/>
<rect x="85.77" y="342" width="3.2" height="7.9" fill="#505050"/>
<rect x="90.80" y="321.9" width="2.6" height="10.7" fill="#f0bb10"/>
<rect x="90.50" y="342" width="3.2" height="7.9" fill="#505050"/>
<rect x="95.53" y="321.9" width="2.6" height="10.7" fill="#f0bb10"/>
<rect x="95.23" y="342" width="3.2" height="7.9" fill="#505050"/>
<rect x="100.26" y="321.9" width="2.6" height="10.7" fill="#f0bb10"/>
<rect x="99.96" y="342" width="3.2" height="7.9" fill="#505050"/>
<rect x="104.99" y="321.9" width="2.6" height="10.7" fill="#f0bb10"/>
<rect x="104.69" y="342" width="3.2" height="7.9" fill="#505050"/>
<rect x="109.72" y="321.9" width="2.6" height="10.7" fill="#f0bb10"/>
<rect x="109.42" y="342" width="3.2" height="7.9" fill="#505050"/>
<rect x="114.45" y="321.9" width="2.6" height="10.7" fill="#f0bb10"/>
<rect x="114.15" y="342" width="3.2" height="7.9" fill="#505050"/>
<rect x="119.18" y="321.9" width="2.6" height="10.7" fill="#f0bb10"/>
<rect x="118.88" y="342" width="3.2" height="7.9" fill="#505050"/>
<rect x="123.91" y="321.9" width="2.6" height="10.7" fill="#f0bb10"/>
<rect x="123.61" y="342" width="3.2" height="7.9" fill="#505050"/>
<rect x="128.64" y="321.9" width="2.6" height="10.7" fill="#f0bb10"/>
<rect x="128.34" y="342" width="3.2" height="7.9" fill="#505050"/>
<rect x="133.37" y="321.9" width="2.6" height="10.7" fill="#f0bb10"/>
<rect x="133.07" y="342" width="3.2" height="7.9" fill="#505050"/>
<rect x="138.10" y="321.9" width="2.6" height="10.7" fill="#f0bb10"/>
<rect x="137.80" y="342" width="3.2" height="7.9" fill="#505050"/>
<rect x="142.83" y="321.9" width="2.6" height="10.7" fill="#f0bb10"/>
<rect x="142.53" y="342" width="3.2" height="7.9" fill="#505050"/>
<rect x="147.56" y="321.9" width="2.6" height="10.7" fill="#f0bb10"/>
<rect x="147.26" y="342" width="3.2" height="7.9" fill="#505050"/>
<rect x="152.29" y="321.9" width="2.6" height="10.7" fill="#f0bb10"/>
<rect x="151.99" y="342" width="3.2" height="7.9" fill="#505050"/>
</svg>
<div class="a" style="left:232px;top:41px;width:428px;height:139px;background:#fff;border:1px solid #adadad;overflow:hidden">
<div class="a" style="left:12.50px;top:13.00px;width:403.50px;height:17.25px;background:#c8ffc8"></div>
<div class="a" style="left:12.50px;top:30.25px;width:403.50px;height:17.25px;background:#c8ffc8"></div>
<div class="a" style="left:12.50px;top:47.50px;width:403.50px;height:17.25px;background:#c8ffc8"></div>
<div class="a" style="left:12.50px;top:64.75px;width:403.50px;height:17.25px;background:#ffc8c8"></div>
<div class="a" style="left:12.50px;top:82.00px;width:403.50px;height:17.25px;background:#ffc8c8"></div>
<div class="a" style="left:12.50px;top:99.25px;width:403.50px;height:17.25px;background:#c8ffc8"></div>
<div class="a" style="left:12.50px;top:116.50px;width:403.50px;height:17.25px;background:#ffc8c8"></div>
<div class="a" style="left:13.00px;top:29.75px;width:403.50px;height:1px;background:#dedede"></div>
<div class="a" style="left:13.00px;top:47.00px;width:403.50px;height:1px;background:#dedede"></div>
<div class="a" style="left:13.00px;top:64.25px;width:403.50px;height:1px;background:#dedede"></div>
<div class="a" style="left:13.00px;top:81.50px;width:403.50px;height:1px;background:#dedede"></div>
<div class="a" style="left:13.00px;top:98.75px;width:403.50px;height:1px;background:#dedede"></div>
<div class="a" style="left:13.00px;top:116.00px;width:403.50px;height:1px;background:#dedede"></div>
<div class="a" style="left:13.00px;top:133.25px;width:403.50px;height:1px;background:#dedede"></div>
<div class="a" style="left:12.00px;top:0;width:1px;height:128.30px;background:#dcdcdc"></div>
<div class="a" style="left:133.00px;top:0;width:1px;height:128.30px;background:#dcdcdc"></div>
<div class="a" style="left:295.00px;top:0;width:1px;height:128.30px;background:#dcdcdc"></div>
<div class="a" style="left:335.00px;top:0;width:1px;height:128.30px;background:#dcdcdc"></div>
<div class="t tx" style="left:57.70px;top:3.87px">Test name</div>
<div class="t tx" style="left:201.70px;top:3.87px">Value</div>
<div class="t tx" style="left:306.00px;top:3.87px">Status</div>
<div class="t tx" style="left:352.70px;top:3.87px">Expected value</div>
<div class="t tx" style="left:2.90px;top:18.47px">1</div>
<div class="t tx" style="left:15.10px;top:18.47px;width:117.4px;overflow:hidden">Temperatures [degC]</div>
<div class="t tx" style="left:135.80px;top:18.47px;width:158.7px;overflow:hidden">[23.52, 23.49]</div>
<div class="t tx" style="left:297.30px;top:18.47px;width:37.2px;overflow:hidden">Passed</div>
<div class="t tx" style="left:337.30px;top:18.47px;width:77.7px;overflow:hidden">20 &lt; T1,T2 &lt; 30</div>
<div class="t tx" style="left:2.90px;top:35.72px">2</div>
<div class="t tx" style="left:15.10px;top:35.72px;width:117.4px;overflow:hidden">DeltaT [degC]</div>
<div class="t tx" style="left:135.80px;top:35.72px;width:158.7px;overflow:hidden">-0.036</div>
<div class="t tx" style="left:297.30px;top:35.72px;width:37.2px;overflow:hidden">Passed</div>
<div class="t tx" style="left:337.30px;top:35.72px;width:77.7px;overflow:hidden">&lt;-0.7, 0.7&gt;</div>
<div class="t tx" style="left:2.90px;top:52.97px">3</div>
<div class="t tx" style="left:15.10px;top:52.97px;width:117.4px;overflow:hidden">Idle current [mA]</div>
<div class="t tx" style="left:135.80px;top:52.97px;width:158.7px;overflow:hidden">89</div>
<div class="t tx" style="left:297.30px;top:52.97px;width:37.2px;overflow:hidden">Passed</div>
<div class="t tx" style="left:337.30px;top:52.97px;width:77.7px;overflow:hidden">&lt;1.0, 140.0&gt;</div>
<div class="t tx" style="left:2.90px;top:70.22px">4</div>
<div class="t tx" style="left:15.10px;top:70.22px;width:117.4px;overflow:hidden">Idle voltages [V]</div>
<div class="t tx" style="left:135.80px;top:70.22px;width:158.7px;overflow:hidden">[1.79, 0.25, 1.82]</div>
<div class="t tx" style="left:297.30px;top:70.22px;width:37.2px;overflow:hidden">Failed</div>
<div class="t tx" style="left:337.30px;top:70.22px;width:77.7px;overflow:hidden">[1.7, 1.1, 1.7] &lt;= V &lt;= ...</div>
<div class="t tx" style="left:2.90px;top:87.47px">5</div>
<div class="t tx" style="left:15.10px;top:87.47px;width:117.4px;overflow:hidden">Power good outputs</div>
<div class="t tx" style="left:135.80px;top:87.47px;width:158.7px;overflow:hidden">[1, 0, 1]</div>
<div class="t tx" style="left:297.30px;top:87.47px;width:37.2px;overflow:hidden">Failed</div>
<div class="t tx" style="left:337.30px;top:87.47px;width:77.7px;overflow:hidden">[1, 1, 1]</div>
<div class="t tx" style="left:2.90px;top:104.72px">6</div>
<div class="t tx" style="left:15.10px;top:104.72px;width:117.4px;overflow:hidden">Disable current [mA]</div>
<div class="t tx" style="left:135.80px;top:104.72px;width:158.7px;overflow:hidden">28.2</div>
<div class="t tx" style="left:297.30px;top:104.72px;width:37.2px;overflow:hidden">Passed</div>
<div class="t tx" style="left:337.30px;top:104.72px;width:77.7px;overflow:hidden">25.0 &lt;= I &lt;= 35.0</div>
<div class="t tx" style="left:2.90px;top:121.97px">7</div>
<div class="t tx" style="left:15.10px;top:121.97px;width:117.4px;overflow:hidden">CH X: efficiency</div>
<div class="t tx" style="left:135.80px;top:121.97px;width:158.7px;overflow:hidden">CH X efficiency 30.5% is out of range for Vin=10.0...</div>
<div class="t tx" style="left:297.30px;top:121.97px;width:37.2px;overflow:hidden">Failed</div>
<div class="t tx" style="left:337.30px;top:121.97px;width:77.7px;overflow:hidden">See plot below.</div>
<div class="a" style="left:0;top:128.30px;width:416.00px;height:8.70px;background:#f0f0f0"></div>
<div class="a" style="left:10.20px;top:129.10px;width:317.10px;height:7.10px;background:#cdcdcd"></div>
<svg class="a" style="left:2.50px;top:130.80px" width="5" height="5" viewBox="0 0 5 5"><path d="M3.3 0.6L1.2 2.5L3.3 4.4" stroke="#606060" stroke-width="1" fill="none"/></svg>
<svg class="a" style="left:409.50px;top:130.80px" width="5" height="5" viewBox="0 0 5 5"><path d="M1.7 0.6L3.8 2.5L1.7 4.4" stroke="#606060" stroke-width="1" fill="none"/></svg>
<div class="a" style="left:416.00px;top:0;width:10.00px;height:137.00px;background:#f0f0f0"></div>
<div class="a" style="left:417.30px;top:10.20px;width:7.4px;height:9.6px;background:#cdcdcd"></div>
<svg class="a" style="left:418.60px;top:3.40px" width="5" height="4" viewBox="0 0 5 4"><path d="M0.5 3.2L2.5 1.1L4.5 3.2" stroke="#606060" stroke-width="1" fill="none"/></svg>
<svg class="a" style="left:418.60px;top:121.60px" width="5" height="4" viewBox="0 0 5 4"><path d="M0.5 0.8L2.5 2.9L4.5 0.8" stroke="#606060" stroke-width="1" fill="none"/></svg>
</div>
<div class="a" style="left:232px;top:180px;width:43px;height:185px;background:#fff;border:1px solid #adadad;overflow:hidden">
<div class="a" style="left:1px;top:0.5px;width:40px;height:9.6px;background:#cce8ff;border:1px solid #99d1ff"></div>
<div class="t tx" style="left:2.8px;top:2.3px;width:38px;overflow:hidden">CH X: eff.</div>
<div class="t tx" style="left:2.8px;top:12.0px;width:38px;overflow:hidden">CH X: load regulation</div>
<div class="t tx" style="left:2.8px;top:21.6px;width:38px;overflow:hidden">CH Y: eff.</div>
<div class="t tx" style="left:2.8px;top:31.2px;width:38px;overflow:hidden">CH Y: load regulation</div>
<div class="a" style="left:0;top:174px;width:41px;height:9px;background:#f0f0f0"></div>
<div class="a" style="left:10px;top:174.6px;width:16.6px;height:7.2px;background:#cdcdcd"></div>
<svg class="a" style="left:2.5px;top:176.2px" width="5" height="5" viewBox="0 0 5 5"><path d="M3.3 0.6L1.2 2.5L3.3 4.4" stroke="#606060" stroke-width="1" fill="none"/></svg>
<svg class="a" style="left:33.5px;top:176.2px" width="5" height="5" viewBox="0 0 5 5"><path d="M1.7 0.6L3.8 2.5L1.7 4.4" stroke="#606060" stroke-width="1" fill="none"/></svg>
</div>

<svg class="a" style="left:276px;top:181px" width="388" height="196" viewBox="276 181 388 196" font-family="Liberation Sans, sans-serif">
<rect x="339.5" y="211.5" width="309.70000000000005" height="129.0" fill="#fff"/>
<line x1="339.50" y1="211.5" x2="339.50" y2="340.5" stroke="#b0b0b0" stroke-opacity="0.55" stroke-width="0.9"/>
<line x1="378.23" y1="211.5" x2="378.23" y2="340.5" stroke="#b0b0b0" stroke-opacity="0.55" stroke-width="0.9"/>
<line x1="416.95" y1="211.5" x2="416.95" y2="340.5" stroke="#b0b0b0" stroke-opacity="0.55" stroke-width="0.9"/>
<line x1="455.68" y1="211.5" x2="455.68" y2="340.5" stroke="#b0b0b0" stroke-opacity="0.55" stroke-width="0.9"/>
<line x1="494.40" y1="211.5" x2="494.40" y2="340.5" stroke="#b0b0b0" stroke-opacity="0.55" stroke-width="0.9"/>
<line x1="533.12" y1="211.5" x2="533.12" y2="340.5" stroke="#b0b0b0" stroke-opacity="0.55" stroke-width="0.9"/>
<line x1="571.85" y1="211.5" x2="571.85" y2="340.5" stroke="#b0b0b0" stroke-opacity="0.55" stroke-width="0.9"/>
<line x1="610.58" y1="211.5" x2="610.58" y2="340.5" stroke="#b0b0b0" stroke-opacity="0.55" stroke-width="0.9"/>
<line x1="649.30" y1="211.5" x2="649.30" y2="340.5" stroke="#b0b0b0" stroke-opacity="0.55" stroke-width="0.9"/>
<line x1="339.5" y1="326.80" x2="649.2" y2="326.80" stroke="#b0b0b0" stroke-opacity="0.55" stroke-width="0.9"/>
<line x1="339.5" y1="303.25" x2="649.2" y2="303.25" stroke="#b0b0b0" stroke-opacity="0.55" stroke-width="0.9"/>
<line x1="339.5" y1="279.70" x2="649.2" y2="279.70" stroke="#b0b0b0" stroke-opacity="0.55" stroke-width="0.9"/>
<line x1="339.5" y1="256.15" x2="649.2" y2="256.15" stroke="#b0b0b0" stroke-opacity="0.55" stroke-width="0.9"/>
<line x1="339.5" y1="232.60" x2="649.2" y2="232.60" stroke="#b0b0b0" stroke-opacity="0.55" stroke-width="0.9"/>
<polygon points="347.25,327.00 358.86,280.00 378.23,249.00 397.59,238.80 416.95,232.50 455.68,226.20 494.40,225.80 533.12,228.40 571.85,231.80 610.58,235.40 649.30,239.80 649.30,250.80 610.58,244.90 571.85,240.60 533.12,236.70 494.40,234.90 455.68,236.20 416.95,240.80 397.59,249.00 378.23,259.90 358.86,291.60 347.25,336.00" fill="#1f77b4" fill-opacity="0.2" stroke="#444" stroke-opacity="0.55" stroke-width="0.7"/>
<polygon points="347.25,324.50 358.86,275.50 378.23,243.30 397.59,232.30 416.95,225.70 455.68,219.10 494.40,220.00 533.12,220.90 571.85,224.70 610.58,229.20 649.30,234.10 649.30,240.50 610.58,236.00 571.85,232.40 533.12,229.00 494.40,226.40 455.68,226.80 416.95,233.70 397.59,240.00 378.23,250.30 358.86,281.00 347.25,328.00" fill="#ff7f0e" fill-opacity="0.2" stroke="#444" stroke-opacity="0.55" stroke-width="0.7"/>
<polygon points="347.25,322.00 358.86,272.00 378.23,240.10 397.59,227.60 416.95,220.90 455.68,212.70 494.40,212.30 533.12,214.10 571.85,218.00 610.58,222.80 649.30,228.20 649.30,234.10 610.58,229.20 571.85,224.70 533.12,220.90 494.40,220.00 455.68,219.10 416.95,225.70 397.59,232.30 378.23,243.30 358.86,275.50 347.25,324.50" fill="#2ca02c" fill-opacity="0.2" stroke="#444" stroke-opacity="0.55" stroke-width="0.7"/>
<polyline points="347.25,334.70 358.86,286.90 378.23,252.50 397.59,242.40 416.95,236.20 436.31,232.10 455.68,229.60 475.04,229.10 494.40,230.50 513.76,231.40 533.12,233.60 552.49,236.25 571.85,238.60 591.21,240.70 610.58,243.50 629.94,246.50 649.30,249.30" fill="none" stroke="#1f77b4" stroke-width="1.1" stroke-dasharray="3.6 1.6"/>
<circle cx="347.25" cy="334.70" r="2.1" fill="#1f77b4"/>
<circle cx="358.86" cy="286.90" r="2.1" fill="#1f77b4"/>
<circle cx="378.23" cy="252.50" r="2.1" fill="#1f77b4"/>
<circle cx="397.59" cy="242.40" r="2.1" fill="#1f77b4"/>
<circle cx="416.95" cy="236.20" r="2.1" fill="#1f77b4"/>
<circle cx="436.31" cy="232.10" r="2.1" fill="#1f77b4"/>
<circle cx="455.68" cy="229.60" r="2.1" fill="#1f77b4"/>
<circle cx="475.04" cy="229.10" r="2.1" fill="#1f77b4"/>
<circle cx="494.40" cy="230.50" r="2.1" fill="#1f77b4"/>
<circle cx="513.76" cy="231.40" r="2.1" fill="#1f77b4"/>
<circle cx="533.12" cy="233.60" r="2.1" fill="#1f77b4"/>
<circle cx="552.49" cy="236.25" r="2.1" fill="#1f77b4"/>
<circle cx="571.85" cy="238.60" r="2.1" fill="#1f77b4"/>
<circle cx="591.21" cy="240.70" r="2.1" fill="#1f77b4"/>
<circle cx="610.58" cy="243.50" r="2.1" fill="#1f77b4"/>
<circle cx="629.94" cy="246.50" r="2.1" fill="#1f77b4"/>
<circle cx="649.30" cy="249.30" r="2.1" fill="#1f77b4"/>
<polyline points="347.25,325.60 358.86,276.00 378.23,242.70 397.59,233.70 416.95,228.20 436.31,225.20 455.68,223.40 475.04,223.40 494.40,224.60 513.76,227.00 533.12,228.60 552.49,231.40 571.85,233.60 591.21,236.80 610.58,239.50 629.94,242.00 649.30,245.00" fill="none" stroke="#ff7f0e" stroke-width="1.1" stroke-dasharray="3.6 1.6"/>
<circle cx="347.25" cy="325.60" r="2.1" fill="#ff7f0e"/>
<circle cx="358.86" cy="276.00" r="2.1" fill="#ff7f0e"/>
<circle cx="378.23" cy="242.70" r="2.1" fill="#ff7f0e"/>
<circle cx="397.59" cy="233.70" r="2.1" fill="#ff7f0e"/>
<circle cx="416.95" cy="228.20" r="2.1" fill="#ff7f0e"/>
<circle cx="436.31" cy="225.20" r="2.1" fill="#ff7f0e"/>
<circle cx="455.68" cy="223.40" r="2.1" fill="#ff7f0e"/>
<circle cx="475.04" cy="223.40" r="2.1" fill="#ff7f0e"/>
<circle cx="494.40" cy="224.60" r="2.1" fill="#ff7f0e"/>
<circle cx="513.76" cy="227.00" r="2.1" fill="#ff7f0e"/>
<circle cx="533.12" cy="228.60" r="2.1" fill="#ff7f0e"/>
<circle cx="552.49" cy="231.40" r="2.1" fill="#ff7f0e"/>
<circle cx="571.85" cy="233.60" r="2.1" fill="#ff7f0e"/>
<circle cx="591.21" cy="236.80" r="2.1" fill="#ff7f0e"/>
<circle cx="610.58" cy="239.50" r="2.1" fill="#ff7f0e"/>
<circle cx="629.94" cy="242.00" r="2.1" fill="#ff7f0e"/>
<circle cx="649.30" cy="245.00" r="2.1" fill="#ff7f0e"/>
<polyline points="347.25,313.40 358.86,262.60 378.23,232.20 397.59,224.40 416.95,220.20 436.31,217.50 455.68,217.10 475.04,218.00 494.40,220.20 513.76,222.00 533.12,224.30 552.49,227.00 571.85,229.60 591.21,232.70 610.58,235.70 629.94,238.50 649.30,241.40" fill="none" stroke="#2ca02c" stroke-width="1.1" stroke-dasharray="3.6 1.6"/>
<circle cx="347.25" cy="313.40" r="2.1" fill="#2ca02c"/>
<circle cx="358.86" cy="262.60" r="2.1" fill="#2ca02c"/>
<circle cx="378.23" cy="232.20" r="2.1" fill="#2ca02c"/>
<circle cx="397.59" cy="224.40" r="2.1" fill="#2ca02c"/>
<circle cx="416.95" cy="220.20" r="2.1" fill="#2ca02c"/>
<circle cx="436.31" cy="217.50" r="2.1" fill="#2ca02c"/>
<circle cx="455.68" cy="217.10" r="2.1" fill="#2ca02c"/>
<circle cx="475.04" cy="218.00" r="2.1" fill="#2ca02c"/>
<circle cx="494.40" cy="220.20" r="2.1" fill="#2ca02c"/>
<circle cx="513.76" cy="222.00" r="2.1" fill="#2ca02c"/>
<circle cx="533.12" cy="224.30" r="2.1" fill="#2ca02c"/>
<circle cx="552.49" cy="227.00" r="2.1" fill="#2ca02c"/>
<circle cx="571.85" cy="229.60" r="2.1" fill="#2ca02c"/>
<circle cx="591.21" cy="232.70" r="2.1" fill="#2ca02c"/>
<circle cx="610.58" cy="235.70" r="2.1" fill="#2ca02c"/>
<circle cx="629.94" cy="238.50" r="2.1" fill="#2ca02c"/>
<circle cx="649.30" cy="241.40" r="2.1" fill="#2ca02c"/>
<rect x="649.7" y="208.5" width="10" height="135.0" fill="#fff"/>
<rect x="339.5" y="211.5" width="309.70000000000005" height="129.0" fill="none" stroke="#262626" stroke-width="0.8"/>
<line x1="339.50" y1="340.5" x2="339.50" y2="342.9" stroke="#262626" stroke-width="0.8"/>
<text x="339.70" y="349.6" font-size="6" letter-spacing="0.35" text-anchor="middle" fill="#1a1a1a" stroke="#1a1a1a" stroke-width="0.12">0.0</text>
<line x1="378.23" y1="340.5" x2="378.23" y2="342.9" stroke="#262626" stroke-width="0.8"/>
<text x="378.43" y="349.6" font-size="6" letter-spacing="0.35" text-anchor="middle" fill="#1a1a1a" stroke="#1a1a1a" stroke-width="0.12">0.5</text>
<line x1="416.95" y1="340.5" x2="416.95" y2="342.9" stroke="#262626" stroke-width="0.8"/>
<text x="417.15" y="349.6" font-size="6" letter-spacing="0.35" text-anchor="middle" fill="#1a1a1a" stroke="#1a1a1a" stroke-width="0.12">1.0</text>
<line x1="455.68" y1="340.5" x2="455.68" y2="342.9" stroke="#262626" stroke-width="0.8"/>
<text x="455.88" y="349.6" font-size="6" letter-spacing="0.35" text-anchor="middle" fill="#1a1a1a" stroke="#1a1a1a" stroke-width="0.12">1.5</text>
<line x1="494.40" y1="340.5" x2="494.40" y2="342.9" stroke="#262626" stroke-width="0.8"/>
<text x="494.60" y="349.6" font-size="6" letter-spacing="0.35" text-anchor="middle" fill="#1a1a1a" stroke="#1a1a1a" stroke-width="0.12">2.0</text>
<line x1="533.12" y1="340.5" x2="533.12" y2="342.9" stroke="#262626" stroke-width="0.8"/>
<text x="533.33" y="349.6" font-size="6" letter-spacing="0.35" text-anchor="middle" fill="#1a1a1a" stroke="#1a1a1a" stroke-width="0.12">2.5</text>
<line x1="571.85" y1="340.5" x2="571.85" y2="342.9" stroke="#262626" stroke-width="0.8"/>
<text x="572.05" y="349.6" font-size="6" letter-spacing="0.35" text-anchor="middle" fill="#1a1a1a" stroke="#1a1a1a" stroke-width="0.12">3.0</text>
<line x1="610.58" y1="340.5" x2="610.58" y2="342.9" stroke="#262626" stroke-width="0.8"/>
<text x="610.78" y="349.6" font-size="6" letter-spacing="0.35" text-anchor="middle" fill="#1a1a1a" stroke="#1a1a1a" stroke-width="0.12">3.5</text>
<line x1="649.30" y1="340.5" x2="649.30" y2="342.9" stroke="#262626" stroke-width="0.8"/>
<text x="649.50" y="349.6" font-size="6" letter-spacing="0.35" text-anchor="middle" fill="#1a1a1a" stroke="#1a1a1a" stroke-width="0.12">4.0</text>
<line x1="337.1" y1="326.80" x2="339.5" y2="326.80" stroke="#262626" stroke-width="0.8"/>
<text x="334.6" y="329.00" font-size="6" letter-spacing="0.1" text-anchor="end" fill="#1a1a1a" stroke="#1a1a1a" stroke-width="0.12">30</text>
<line x1="337.1" y1="303.25" x2="339.5" y2="303.25" stroke="#262626" stroke-width="0.8"/>
<text x="334.6" y="305.45" font-size="6" letter-spacing="0.1" text-anchor="end" fill="#1a1a1a" stroke="#1a1a1a" stroke-width="0.12">40</text>
<line x1="337.1" y1="279.70" x2="339.5" y2="279.70" stroke="#262626" stroke-width="0.8"/>
<text x="334.6" y="281.90" font-size="6" letter-spacing="0.1" text-anchor="end" fill="#1a1a1a" stroke="#1a1a1a" stroke-width="0.12">50</text>
<line x1="337.1" y1="256.15" x2="339.5" y2="256.15" stroke="#262626" stroke-width="0.8"/>
<text x="334.6" y="258.35" font-size="6" letter-spacing="0.1" text-anchor="end" fill="#1a1a1a" stroke="#1a1a1a" stroke-width="0.12">60</text>
<line x1="337.1" y1="232.60" x2="339.5" y2="232.60" stroke="#262626" stroke-width="0.8"/>
<text x="334.6" y="234.80" font-size="6" letter-spacing="0.1" text-anchor="end" fill="#1a1a1a" stroke="#1a1a1a" stroke-width="0.12">70</text>
<text x="493.8" y="358.3" font-size="6.8" letter-spacing="0.22" text-anchor="middle" fill="#1a1a1a" stroke="#1a1a1a" stroke-width="0.12">Current [A]</text>
<text transform="translate(322.6,276.6) rotate(-90)" x="0" y="0" font-size="6.8" letter-spacing="0.22" text-anchor="middle" fill="#1a1a1a" stroke="#1a1a1a" stroke-width="0.12">Efficiency [%]</text>
<rect x="596.6" y="282" width="50.4" height="54.3" rx="1.5" fill="#fff" fill-opacity="0.8" stroke="#d8d8d8" stroke-width="0.7"/>
<rect x="599" y="284.20" width="13.5" height="4.8" fill="#1f77b4" fill-opacity="0.1" stroke="#1f77b4" stroke-opacity="0.08" stroke-width="0.6"/>
<rect x="599" y="293.10" width="13.5" height="4.8" fill="#ff7f0e" fill-opacity="0.1" stroke="#ff7f0e" stroke-opacity="0.08" stroke-width="0.6"/>
<rect x="599" y="301.80" width="13.5" height="4.8" fill="#2ca02c" fill-opacity="0.1" stroke="#2ca02c" stroke-opacity="0.08" stroke-width="0.6"/>
<line x1="599" y1="313.5" x2="612.5" y2="313.5" stroke="#1f77b4" stroke-width="1.1" stroke-dasharray="3.6 1.6"/>
<circle cx="605.75" cy="313.5" r="2.1" fill="#1f77b4"/>
<line x1="599" y1="321.7" x2="612.5" y2="321.7" stroke="#ff7f0e" stroke-width="1.1" stroke-dasharray="3.6 1.6"/>
<circle cx="605.75" cy="321.7" r="2.1" fill="#ff7f0e"/>
<line x1="599" y1="331.1" x2="612.5" y2="331.1" stroke="#2ca02c" stroke-width="1.1" stroke-dasharray="3.6 1.6"/>
<circle cx="605.75" cy="331.1" r="2.1" fill="#2ca02c"/>
<text x="616.9" y="288.90" font-size="6.5" letter-spacing="0.28" fill="#1a1a1a" stroke="#1a1a1a" stroke-width="0.12">12 V lim</text>
<text x="616.9" y="297.80" font-size="6.5" letter-spacing="0.28" fill="#1a1a1a" stroke="#1a1a1a" stroke-width="0.12">10 V lim</text>
<text x="616.9" y="306.50" font-size="6.5" letter-spacing="0.28" fill="#1a1a1a" stroke="#1a1a1a" stroke-width="0.12">8 V lim</text>
<text x="616.9" y="315.80" font-size="6.5" letter-spacing="0.28" fill="#1a1a1a" stroke="#1a1a1a" stroke-width="0.12">12 V</text>
<text x="616.9" y="324.00" font-size="6.5" letter-spacing="0.28" fill="#1a1a1a" stroke="#1a1a1a" stroke-width="0.12">10 V</text>
<text x="616.9" y="333.40" font-size="6.5" letter-spacing="0.28" fill="#1a1a1a" stroke="#1a1a1a" stroke-width="0.12">8 V</text>
<text x="606.7" y="198" font-size="6.85" letter-spacing="-0.03" fill="#1a1a1a">x=3.469 y=49.9</text>
<path d="M287 196.3L293 190.8L299 196.3" fill="none" stroke="#000" stroke-width="1.3" stroke-linejoin="miter"/>
<path d="M289.2 196L293 192.6L296.8 196V201H294.2V198.2H291.8V201H289.2Z" fill="#000"/>
<rect x="295.6" y="191.2" width="1.6" height="3" fill="#000"/>
<path d="M316 195.5H307.6M311.2 191.2L307 195.5L311.2 199.8" fill="none" stroke="#555" stroke-width="2.1" stroke-linecap="round" stroke-linejoin="round"/>
<path d="M323.6 195.5H332M328.4 191.2L332.6 195.5L328.4 199.8" fill="none" stroke="#555" stroke-width="2.1" stroke-linecap="round" stroke-linejoin="round"/>
<line x1="339.6" y1="188" x2="339.6" y2="201.6" stroke="#d9d9d9" stroke-width="0.8"/>
<line x1="414.5" y1="188" x2="414.5" y2="201.6" stroke="#d9d9d9" stroke-width="0.8"/>
<path d="M350.2 190.3V200.7M345 195.5H355.4" stroke="#000" stroke-width="1.9"/>
<path d="M350.2 188.8L353 191.8H347.4ZM350.2 202.2L353 199.2H347.4ZM343.6 195.5L346.6 192.7V198.3ZM356.8 195.5L353.8 192.7V198.3Z" fill="#000"/>
<circle cx="367" cy="194.2" r="3.9" fill="none" stroke="#000" stroke-width="1.6"/>
<path d="M369.8 197L373.4 200.6" stroke="#000" stroke-width="1.9" stroke-linecap="round"/>
<path d="M380.4 191.8H391.2M380.4 195.6H391.2M380.4 199.4H391.2" stroke="#000" stroke-width="1.1"/>
<rect x="382.6" y="190.6" width="3.2" height="2.4" rx="1" fill="#000"/><rect x="386" y="194.4" width="3.2" height="2.4" rx="1" fill="#000"/><rect x="382.6" y="198.2" width="3.2" height="2.4" rx="1" fill="#000"/>
<path d="M397.4 190.5V200.6H411" fill="none" stroke="#000" stroke-width="1.1"/>
<path d="M398.6 199.2L402.4 195.2L404.4 197.4L408.6 192.8" fill="none" stroke="#000" stroke-width="1.8"/>
<path d="M406.8 191.2H410.4V194.8Z" fill="#000"/>
<path d="M419.6 190.4H428.2L431 193.2V200.9H419.6Z" fill="none" stroke="#000" stroke-width="1.2"/>
<rect x="422" y="190.4" width="5" height="3.2" fill="#000"/><rect x="425" y="191" width="1.2" height="2" fill="#fff"/>
<rect x="421.6" y="196.6" width="7.4" height="3.8" fill="none" stroke="#000" stroke-width="0.9"/>
</svg>
<div class="a dis" style="left:7px;top:384px;width:74.3px;height:44.6px"></div>
<div class="t" style="left:32.05px;top:401.97px;font-size:9.6px;letter-spacing:0.446px;color:#80848a;font-weight:bold">Start</div>
<div class="a inp" style="left:85.4px;top:383.3px;width:151.6px;height:17.2px"></div>
<div class="t" style="left:88.20px;top:386.57px;font-size:7.0px;letter-spacing:-0.310px;color:#7a7a7a">Operator comment to the measurement...</div>
<div class="a dis" style="left:86.1px;top:404.4px;width:97.2px;height:24.3px"></div>
<div class="t" style="left:123.90px;top:413.67px;font-size:7.0px;letter-spacing:-0.486px;color:#8a8a8a">Confirm</div>
<div class="a dis" style="left:188px;top:404.4px;width:49px;height:24.4px"></div>
<div class="t" style="left:201.80px;top:413.67px;font-size:7.0px;letter-spacing:-0.547px;color:#8a8a8a">Discard</div>
<div class="a" style="left:240px;top:383px;width:347px;height:46px;background:#fff;border:1px solid #adadad;overflow:hidden">
<div class="a" style="left:8.50px;top:8.80px;width:326.10px;height:1px;background:#e4e4e4"></div>
<div class="a" style="left:8.50px;top:20.40px;width:326.10px;height:1px;background:#e4e4e4"></div>
<div class="a" style="left:8.50px;top:31.70px;width:326.10px;height:1px;background:#e4e4e4"></div>
<div class="a" style="left:8.00px;top:0;width:1px;height:46px;background:#e4e4e4"></div>
<div class="a" style="left:88.90px;top:0;width:1px;height:46px;background:#e4e4e4"></div>
<div class="a" style="left:304.10px;top:0;width:1px;height:46px;background:#e4e4e4"></div>
<div class="t" style="left:43.40px;top:3.16px;font-size:5.6px;letter-spacing:-0.22px">Time</div>
<div class="t" style="left:190.70px;top:3.16px;font-size:5.6px;letter-spacing:-0.22px">Event</div>
<div class="t" style="left:312.60px;top:3.16px;font-size:5.6px;letter-spacing:-0.22px">Status</div>
<div class="t" style="left:2.30px;top:12.87px;font-size:7px;letter-spacing:0px">5</div>
<div class="t" style="left:10.90px;top:13.16px;font-size:5.6px;letter-spacing:-0.3px">12:24:16</div>
<div class="t" style="left:91.30px;top:13.16px;font-size:5.6px;letter-spacing:-0.21px">Init relay matrix</div>
<div class="t" style="left:306.30px;top:13.16px;font-size:5.6px;letter-spacing:-0.25px">OK</div>
<div class="t" style="left:2.30px;top:24.12px;font-size:7px;letter-spacing:0px">6</div>
<div class="t" style="left:10.90px;top:24.41px;font-size:5.6px;letter-spacing:-0.3px">12:24:51</div>
<div class="t" style="left:91.30px;top:24.41px;font-size:5.6px;letter-spacing:-0.21px">Measurement discarded</div>
<div class="t" style="left:306.30px;top:24.41px;font-size:5.6px;letter-spacing:-0.25px">FAIL</div>
<div class="t" style="left:2.30px;top:35.37px;font-size:7px;letter-spacing:0px">7</div>
<div class="t" style="left:10.90px;top:35.66px;font-size:5.6px;letter-spacing:-0.3px">12:24:51</div>
<div class="t" style="left:91.30px;top:35.66px;font-size:5.6px;letter-spacing:-0.21px">Ready for a new measurement!</div>
<div class="t" style="left:306.30px;top:35.66px;font-size:5.6px;letter-spacing:-0.25px">OK</div>
<div class="a" style="left:334.60px;top:0;width:10.4px;height:46px;background:#f0f0f0"></div>
<div class="a" style="left:336.00px;top:24.60px;width:8.1px;height:10px;background:#cdcdcd"></div>
<svg class="a" style="left:337.30px;top:3.20px" width="5" height="4" viewBox="0 0 5 4"><path d="M0.5 3.2L2.5 1.1L4.5 3.2" stroke="#606060" stroke-width="1" fill="none"/></svg>
<svg class="a" style="left:337.30px;top:38.20px" width="5" height="4" viewBox="0 0 5 4"><path d="M0.5 0.8L2.5 2.9L4.5 0.8" stroke="#606060" stroke-width="1" fill="none"/></svg>
</div>
<div class="a btn" style="left:591px;top:383.8px;width:74px;height:44.4px"></div>
<div class="t" style="left:617.60px;top:401.72px;font-size:9.9px;letter-spacing:0.076px;color:#000;font-weight:bold">Quit</div>
<div class="a" style="left:6.4px;top:433.3px;width:659px;height:16.2px;background:#fff;border:1px solid #7a7a7a;border-radius:2.5px;overflow:hidden"><div class="a" style="left:0;top:0;width:254.4px;height:100%;background:#06b6cc"></div></div>
<div class="t" style="left:327.00px;top:436.93px;font-size:9.3px;letter-spacing:-0.138px;color:#1a1a1a">37%</div>
</body></html>
